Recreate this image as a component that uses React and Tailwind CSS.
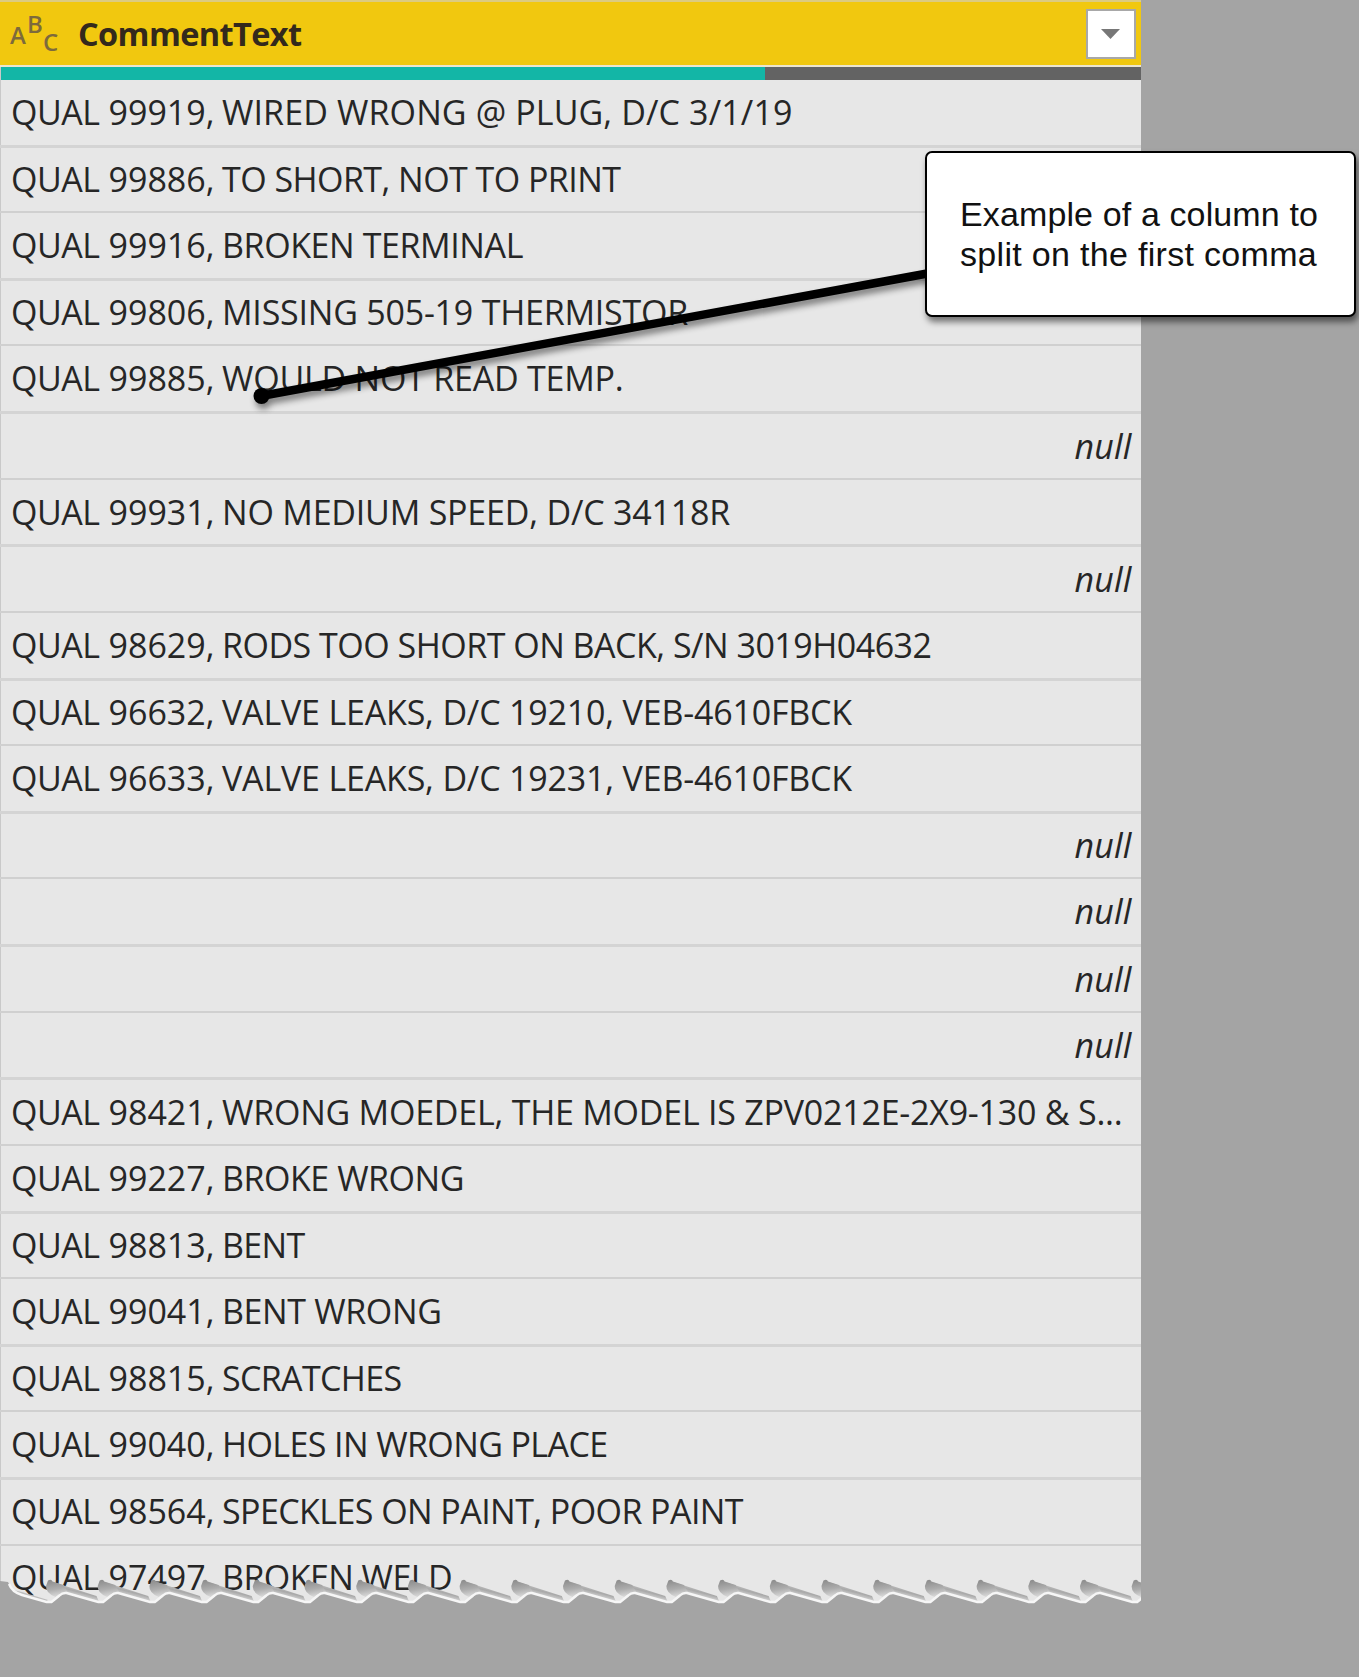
import { useLayoutEffect, useRef, useState } from "react";

const ROWS = [
  ["99919", "WIRED WRONG @ PLUG, D/C 3/1/19", 570.5],
  ["99886", "TO SHORT, NOT TO PRINT", 398.5],
  ["99916", "BROKEN TERMINAL", 301],
  ["99806", "MISSING 505-19 THERMISTOR", 466],
  ["99885", "WOULD NOT READ TEMP.", 401.5],
  null,
  ["99931", "NO MEDIUM SPEED, D/C 34118R", 508],
  null,
  ["98629", "RODS TOO SHORT ON BACK, S/N 3019H04632", 709.5],
  ["96632", "VALVE LEAKS, D/C 19210, VEB-4610FBCK", 630],
  ["96633", "VALVE LEAKS, D/C 19231, VEB-4610FBCK", 630],
  null,
  null,
  null,
  null,
  ["98421", "WRONG MOEDEL, THE MODEL IS ZPV0212E-2X9-130 & S...", 900.5],
  ["99227", "BROKE WRONG", 242],
  ["98813", "BENT", 82.5],
  ["99041", "BENT WRONG", 219.5],
  ["98815", "SCRATCHES", 179.5],
  ["99040", "HOLES IN WRONG PLACE", 385.5],
  ["98564", "SPECKLES ON PAINT, POOR PAINT", 521],
  ["97497", "BROKEN WELD", 230],
];

function Fit({ width, children }) {
  const ref = useRef(null);
  const [spacing, setSpacing] = useState(0);
  useLayoutEffect(() => {
    const natural = ref.current.getBoundingClientRect().width;
    setSpacing((width - natural) / children.length);
  }, []);
  return (
    <span ref={ref} className="inline-block whitespace-pre" style={{ letterSpacing: spacing }}>
      {children}
    </span>
  );
}

function Row({ row, index }) {
  const thick = index % 2 === 0;
  return (
    <div
      className={
        thick
          ? "flex h-[67.65px] items-start border-b-[3px] border-[#d4d4d4] pt-[3.4px] pr-[9px] pl-[11px]"
          : "flex h-[65.6px] items-start border-b-2 border-[#d0d0d0] pt-[3px] pr-[9px] pl-[11px]"
      }
    >
      {row ? (
        <div className="flex h-[58px] items-center font-['Open_Sans','Noto_Sans',sans-serif] text-[34px] text-[#262626]">
          <span className="w-[97.5px]">
            <Fit width={88.5}>QUAL</Fit>
          </span>
          <span className="w-[113.5px]">
            <Fit width={106}>{row[0] + ","}</Fit>
          </span>
          <Fit width={row[2]}>{row[1]}</Fit>
        </div>
      ) : (
        <div className="ml-auto flex h-[58px] items-center font-['Open_Sans',sans-serif] text-[34px] text-[#262626] italic">
          <Fit width={57}>null</Fit>
        </div>
      )}
    </div>
  );
}

const TIPS = Array.from({ length: 22 }, (_, i) => 50.5 + 51.7 * i);

function TornEdge() {
  const zig = TIPS.map((t) => `L${t - 4} 26 L${t + 1} 26 L${t + 9} 19.5 Q${t + 12} 16.5 ${t + 16} 17`).join(" ");
  const edge = `M9 8 Q12 16 22 19 ${zig}`;
  return (
    <svg className="absolute bottom-0 left-0" width="1141" height="36" viewBox="0 0 1141 36">
      <defs>
        <linearGradient id="curl" x1="0" y1="0" x2="0.2" y2="1">
          <stop offset="0.1" stopColor="#8f8f8f" />
          <stop offset="0.6" stopColor="#adadad" />
          <stop offset="1" stopColor="#d6d6d6" />
        </linearGradient>
        <linearGradient id="band" gradientUnits="userSpaceOnUse" x1="20" y1="10.5" x2="18" y2="18.5">
          <stop offset="0" stopColor="#bcbcbc" />
          <stop offset="0.4" stopColor="#a9a9a9" />
          <stop offset="1" stopColor="#dadada" />
        </linearGradient>
      </defs>
      <path d="M13 14 L22 16 L48 24 L44 27 L22 20 Z" fill="#bdbdbd" />
      {TIPS.map((t) => (
        <g key={t} transform={`translate(${t} 0)`}>
          <path d="M4 6.500 L46 20 L49 27 L15 18 L6 16 Z" fill="url(#band)" />
          <path d="M-2.500 4.500 Q1 2.500 2 5.500 L13 9 L17 16 Q12 16 5 21 Q-5 17 -4.500 10 Z" fill="url(#curl)" />
        </g>
      ))}
      <path d={`M0 5 L8 6 L9 8 Q12 16 22 19 ${zig} V36 H0 Z`} fill="#a4a4a4" />
      <path d={edge} fill="none" stroke="#f6f6f6" strokeWidth="2.4" />
    </svg>
  );
}

export default function App() {
  return (
    <div className="relative h-[1677px] w-[1359px] overflow-hidden bg-[#a4a4a4]">
      <div className="relative h-[1612px] w-[1140.5px] overflow-hidden bg-[#e7e7e7] shadow-[inset_1px_0_0_#c9c9c9]">
        <div className="flex h-[65px] items-center border-t-2 border-[#dccb80] bg-[#f1c80f] pl-px font-['Open_Sans',sans-serif]">
          <div className="flex h-[40px] w-[69px] pl-[9px] text-[24px] leading-none font-semibold text-[#7d6a3c]">
            <span className="w-[17px] pt-[9px]">A</span>
            <span className="-mt-[2px] w-[16px]">B</span>
            <span className="pt-[16px]">C</span>
          </div>
          <div className="pl-2 text-[32.5px] leading-[46px] font-bold text-[#33291c]">
            <Fit width={223.5}>CommentText</Fit>
          </div>
          <button className="mr-[5px] ml-auto flex h-[50px] w-[50px] items-center justify-center border-2 border-[#a8a8a8] bg-white">
            <svg width="19" height="10" viewBox="0 0 19 10">
              <path d="M0 0H19L9.500 10Z" fill="#777" />
            </svg>
          </button>
        </div>
        <div className="flex h-[15px] border-t-[2.5px] border-[#ece5cf] pl-px">
          <div className="w-[764px] bg-[#13b6a6]" />
          <div className="flex-1 bg-[#636363]" />
        </div>
        {ROWS.map((row, i) => (
          <Row key={i} row={row} index={i} />
        ))}
        <TornEdge />
      </div>

      <svg className="absolute top-[250px] left-[240px]" width="700" height="170" viewBox="240 250 700 170">
        <g style={{ filter: "drop-shadow(2px 5px 3px rgba(0,0,0,0.45))" }}>
          <path d="M261 396L930 273" stroke="#000" strokeWidth="8.500" />
          <circle cx="261.500" cy="396" r="8" />
        </g>
      </svg>
      <div className="absolute top-[151px] left-[925px] h-[166px] w-[431px] rounded-[7px] border-[2.5px] border-black bg-white pt-[40.5px] pl-[33px] font-['Liberation_Sans',Arial,sans-serif] text-[34px] leading-[40.5px] whitespace-nowrap text-[#111] shadow-[2px_5px_6px_rgba(0,0,0,0.5)]">
        <p><Fit width={358}>Example of a column to</Fit></p>
        <p><Fit width={357}>split on the first comma</Fit></p>
      </div>
    </div>
  );
}
